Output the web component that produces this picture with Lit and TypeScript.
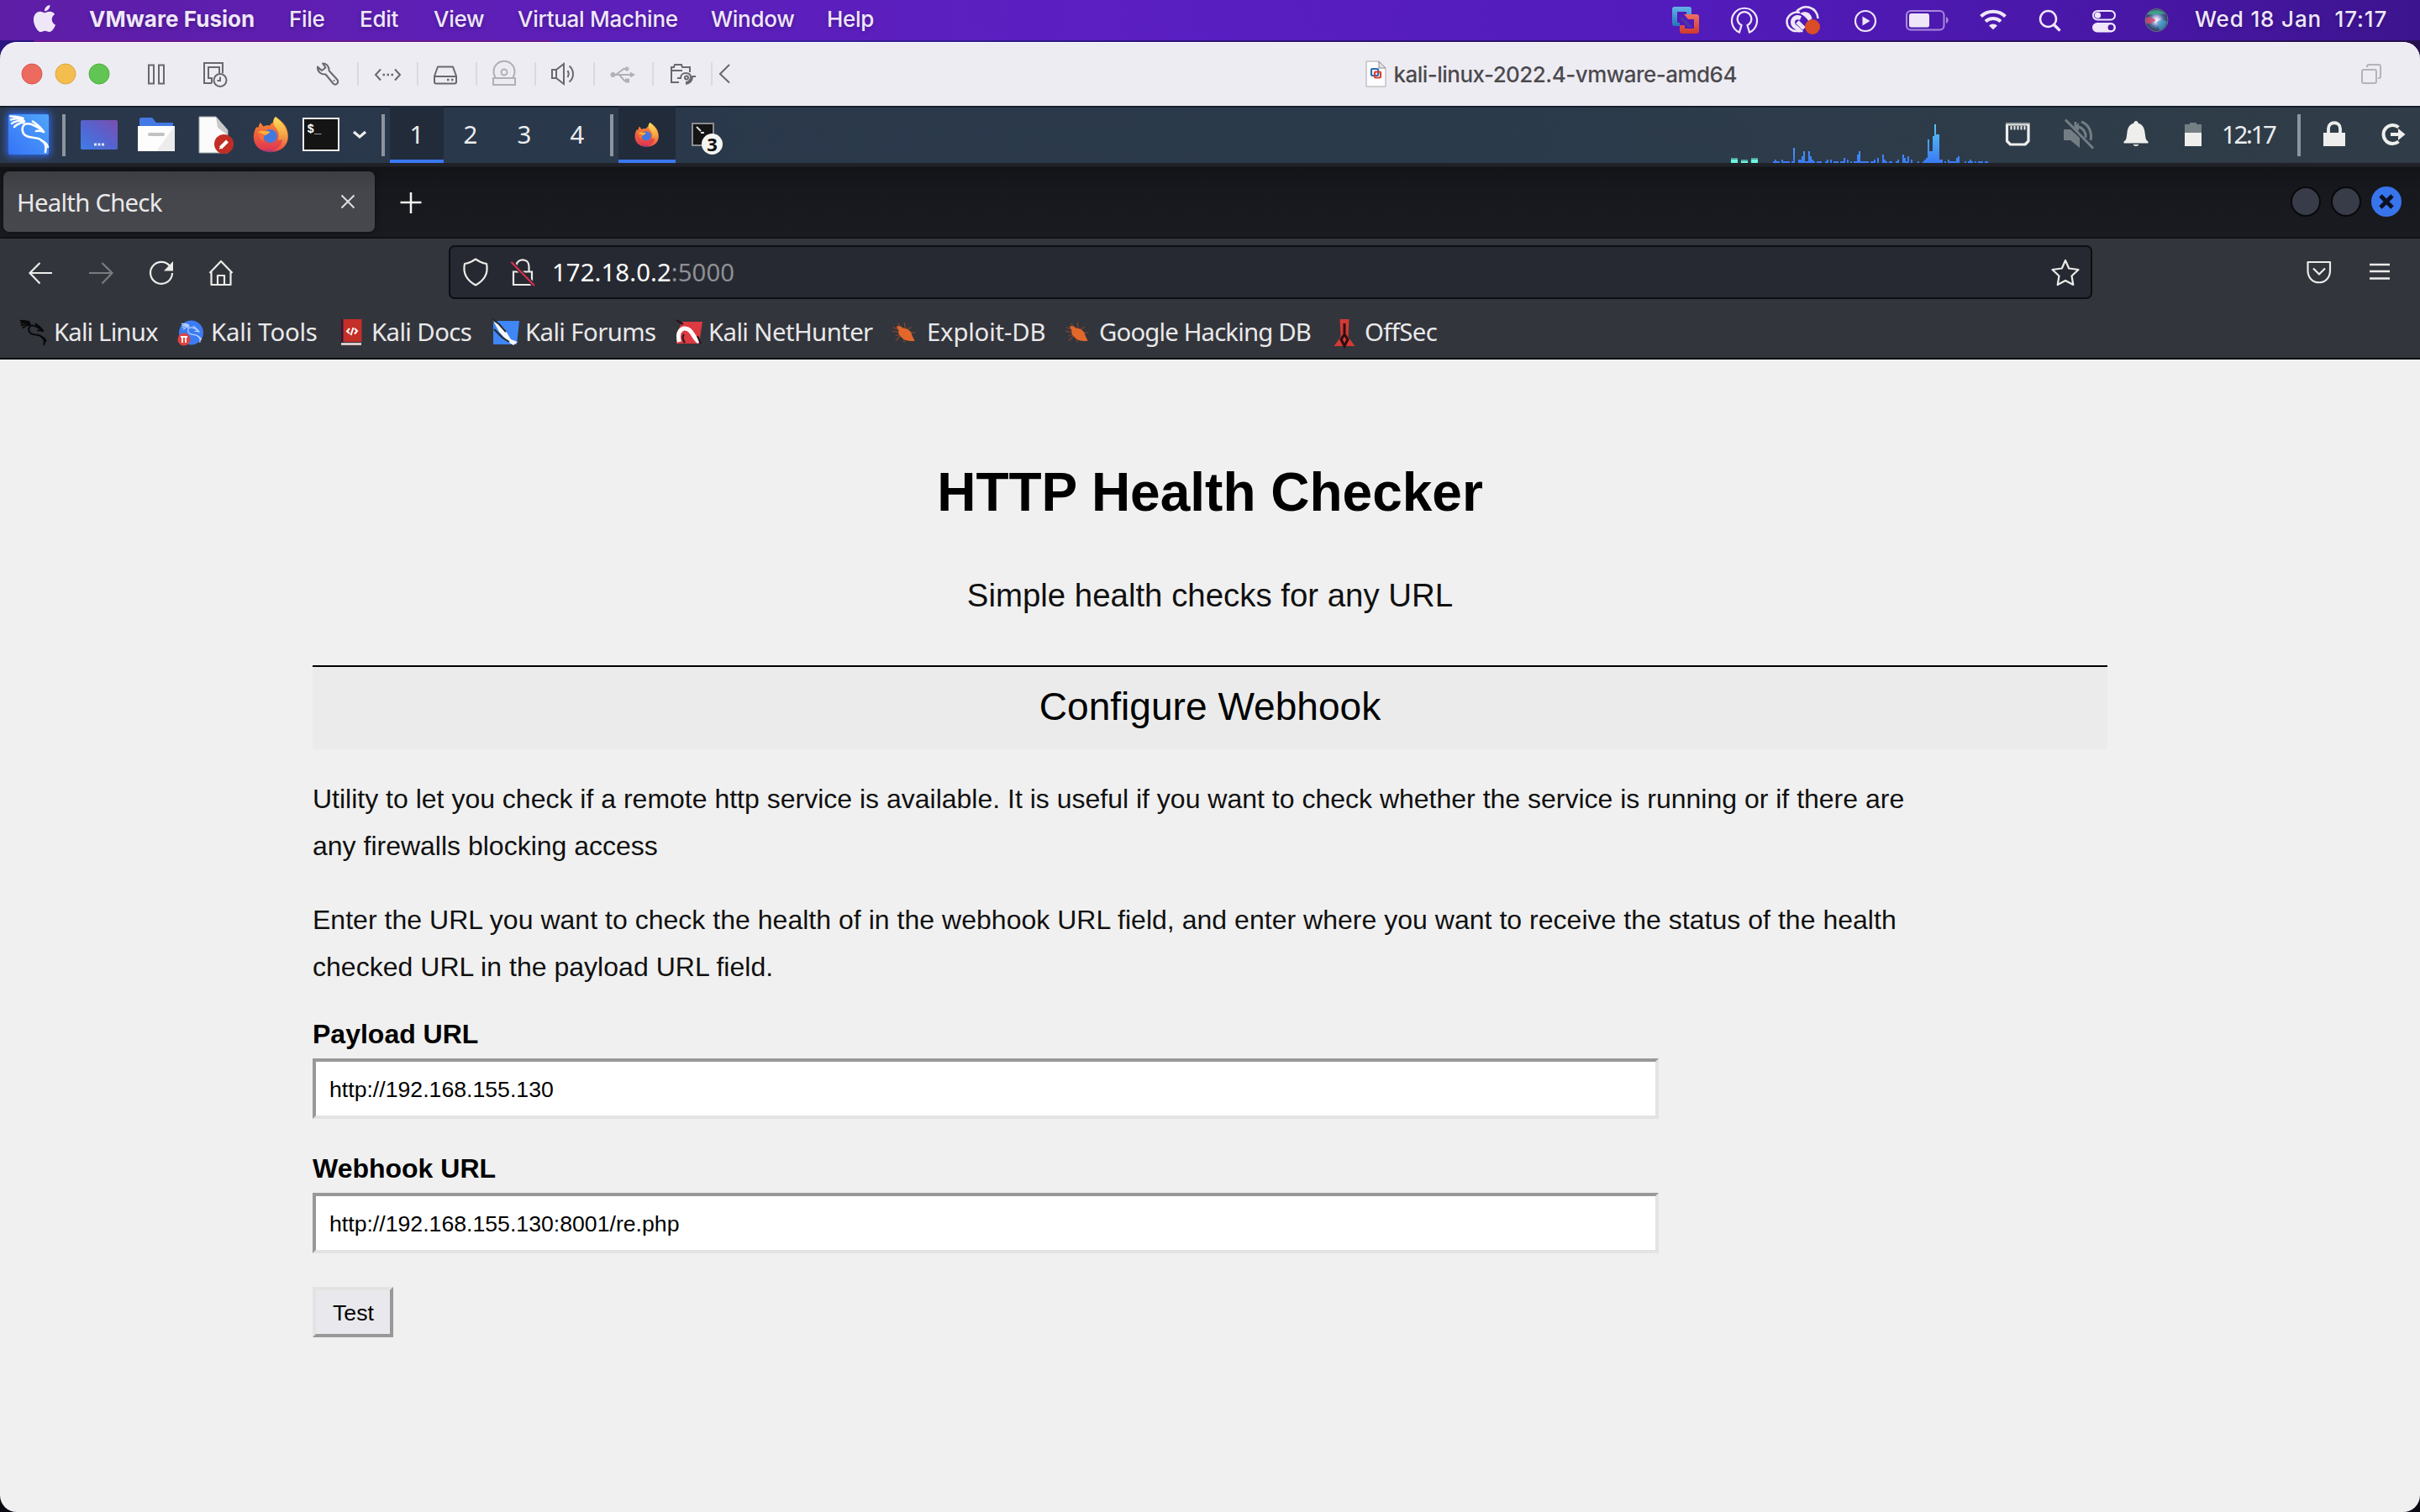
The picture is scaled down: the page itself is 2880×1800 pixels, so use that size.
import { LitElement, html, svg, css, unsafeCSS, SVGTemplateResult } from "lit";
import { customElement, state } from "lit/decorators.js";

/** Turns a list of column starts into grid track widths. */
const tracks = (from: number, starts: number[]) =>
  unsafeCSS(
    [from, ...starts]
      .map((s, i, all) => (i + 1 < all.length ? `${all[i + 1] - s}px` : "1fr"))
      .join(" ")
  );

/** An icon as tall as its row; its drawing uses screen coordinates. */
const icon = (x: number, y: number, w: number, h: number, body: SVGTemplateResult) =>
  html`<svg width=${w} height=${h} viewBox="${x} ${y} ${w} ${h}" fill="none">${body}</svg>`;

const dragon = (color: string, w: number) => svg`
  <g stroke=${color} fill="none" stroke-linecap="round" stroke-linejoin="round" stroke-width=${w}>
    <path d="M2.500 2.500c5 0 10 .3 15 2.500M3 6.500c5-1.800 9-1.500 14-.5M4 11c3.500-2.500 8-3.500 13.500-3.500M7 15c3-3 6-4.500 11-5.500"/>
    <path d="M17 5c-1 1 0 3 2 3.500"/>
    <path d="M19 12c4-1.500 8-.5 12 1.500 4 2 7.500 3 11 7.500-3-1.500-6-1.500-9-1"/>
    <path d="M29 8.500c5 3.500 10 7 13 12.500"/>
    <path d="M19 12c-3.500 4-3 10 1 13 5 4 12 1.500 18 5 5 3 8 8 6 15"/>
    <path d="M39 31c4 2 7 4.500 8 8"/>
  </g>`;

const firefox = svg`
  <path d="M4 13C0 20-1 31 6 38c8 8 24 8 32 0 6-6 7-15 4-23C40 9 34 4 28 0c-2 2-3 5-3 7-2 1-3 2-4 4-3-1-6 0-8 1l-4-5c-1 2-2 4-2 6z" fill="url(#fxBase)"/>
  <path d="M28 0c-4 5-3 9 0 13 4 5 5 10 3 15 2 2 4 1 5-1 1 6-3 13-13 15 10 1 18-4 20-13 2-12-6-22-15-29z" fill="url(#fxTail)"/>
  <circle cx="21.500" cy="24" r="8.500" fill="#4478df"/>
  <path d="M6 19c3-3 7-2 10-1 2 0 4 0 5 1-1 2-4 2-6 4-2 2-3 5-1 8-4-2-7-6-8-12z" fill="#f0703a"/>
  <path d="M6 19c3-2 7-2 10-1 2 0 4 0 5 1-1 2-4 2-5 4-2-1-6-3-10-4z" fill="#fbb13c"/>`;

const bug = (x: number) => svg`
  <g transform="translate(${x} 382) scale(.95)">
    <path d="M1 8l7 3M0 13l9 1M4 25l6-6M15 27l-1-8M15 2l1 7M24 8l-5 2M29 15l-8-1M7 3l4 6M4 19l7-3" stroke="#7d4630" stroke-width="1.300"/>
    <path d="M5 7c4-1 6 0 8 2 6 0 11 4 12 10l3 6c-4 1-14 0-17-5-3-2-4-6-3-8z" fill="#e2672b"/>
  </g>`;

const vmGlyph = svg`
  <path d="M3 0h17a3 3 0 0 1 3 3v6h-6V6H6v13h3v4H3a3 3 0 0 1-3-3V3a3 3 0 0 1 3-3z" fill="url(#vmBlue)"/>
  <path d="M14 9h15a3 3 0 0 1 3 3v17a3 3 0 0 1-3 3H12a3 3 0 0 1-3-3v-7h6v4h11V15h-7z" fill="url(#vmRed)"/>
  <path d="M9 13h4l11 11h-5z" fill="#4a3aa0"/>`;

const activity = [
  2, 4, 2, 2, 0, 4, 2, 2, 2, 2, 0, 2, 18, 0, 0, 4, 4, 8, 14, 2, 2, 14, 8, 4, 2, 0, 2, 2, 2, 0, 0, 2,
  4, 0, 4, 0, 2, 2, 2, 0, 2, 2, 6, 0, 4, 0, 2, 0, 2, 2, 10, 14, 2, 2, 2, 2, 2, 0, 2, 2, 4, 0, 6, 0,
  0, 10, 4, 2, 0, 2, 2, 0, 0, 2, 4, 0, 0, 10, 6, 2, 8, 0, 4, 0, 0, 0, 2, 0, 0, 2, 4, 6, 28, 14, 14, 32,
  46, 34, 34, 4, 4, 0, 2, 0, 4, 2, 2, 2, 2, 6, 8, 0, 0, 0, 2, 0, 2, 4, 2, 0, 2, 0, 2, 2, 2, 0, 2, 2,
];

@customElement("mac-menubar")
class MacMenubar extends LitElement {
  static styles = css`
    :host { display: block; height: 50px; }
    .bar {
      height: 48px; display: grid; padding-left: 36px;
      grid-template-columns: ${tracks(36, [106, 344, 428, 516, 616, 846, 984, 1988, 2056, 2124, 2204, 2264, 2352, 2424, 2486, 2548, 2612])};
      background: linear-gradient(90deg, #5e1ea6, #5e1fb6 18%, #5b1fc2 45%, #521bbb 70%, #4817a6 88%, #3d148f);
      font: 500 26px/46px Inter, sans-serif; color: #efe7f8;
      text-shadow: 0 2px 4px rgba(20, 0, 60, .35);
    }
    .bar span { white-space: pre; letter-spacing: -.27px; }
    .bar .app { font-weight: 700; letter-spacing: .05px; }
    .bar .clock { letter-spacing: .85px; }
    .edge { height: 2px; background: linear-gradient(90deg, #2b1580 40px, #6d1a90 41px, #6a1a8c 650px, #3c2bb0 670px, #2d1378 1400px, #26104f); }
    svg { display: block; }
  `;
  render() {
    return html`
      <div class="bar">
        ${icon(36, 0, 34, 48, svg`<g transform="translate(37 6) scale(1.333)" fill="#efe7f8"><path d="M12.152 6.896c-.948 0-2.415-1.078-3.960-1.040-2.040.027-3.910 1.183-4.961 3.014-2.117 3.675-.546 9.103 1.519 12.090 1.013 1.454 2.208 3.090 3.792 3.039 1.520-.065 2.090-.987 3.935-.987 1.831 0 2.350.987 3.960.948 1.637-.026 2.676-1.480 3.676-2.948 1.156-1.688 1.636-3.325 1.662-3.415-.039-.013-3.182-1.221-3.220-4.857-.026-3.040 2.480-4.494 2.597-4.559-1.429-2.090-3.623-2.324-4.390-2.376-2-.156-3.675 1.090-4.610 1.090zM15.530 3.830c.843-1.012 1.400-2.427 1.245-3.830-1.207.052-2.662.805-3.532 1.818-.78.896-1.454 2.338-1.273 3.714 1.338.104 2.715-.688 3.559-1.701"/></g>`)}
        <span class="app">VMware Fusion</span><span>File</span><span>Edit</span><span>View</span>
        <span>Virtual Machine</span><span>Window</span><span>Help</span>
        ${icon(1988, 0, 40, 48, svg`
          <defs>
            <linearGradient id="vmBlue" x2="0" y2="1"><stop stop-color="#62b4e8"/><stop offset="1" stop-color="#2676b8"/></linearGradient>
            <linearGradient id="vmRed" x2="0" y2="1"><stop stop-color="#ee7064"/><stop offset="1" stop-color="#cf3a2c"/></linearGradient>
          </defs><g transform="translate(1990 8)">${vmGlyph}</g>`)}
        ${icon(2056, 0, 40, 48, svg`<path d="M2070 38.500l2.500-8.500a8.300 8.300 0 1 1 7 0l2.500 8.500a15 15 0 1 0-12 0z" stroke="#efe7f8" stroke-width="2.200"/>`)}
        ${icon(2124, 0, 44, 48, svg`
          <path d="M2163.500 22a14 14 0 0 0-26-7M2142 15c-8-2.500-15.500 4-15.500 11 0 6 5 11 11 11h8" stroke="#efe7f8" stroke-width="2.500"/>
          <path d="M2142 16c7-4 13-1 14.500 6l-4 3c-3-4-6-7-10.500-9z" fill="#efe7f8"/>
          <path d="M2143 21.500c-6-2.500-9.500 1-9.500 5 0 3 2 5 4 6l5 4.500M2139 26l8 8" stroke="#efe7f8" stroke-width="5"/>
          <circle cx="2157" cy="32" r="9" fill="#da4d26"/>`)}
        ${icon(2204, 0, 32, 48, svg`<circle cx="2220" cy="25" r="12" stroke="#efe7f8" stroke-width="2.200"/><path d="M2216.500 19.500v11l9-5.500z" fill="#efe7f8"/>`)}
        ${icon(2264, 0, 60, 48, svg`<rect x="2269" y="13" width="44.500" height="22.500" rx="5" stroke="#a98adb" stroke-width="2"/><rect x="2272" y="16" width="24" height="16.500" rx="2.500" fill="#efe7f8"/><path d="M2316 20c3.500 1.500 3.500 6.500 0 8z" fill="#a98adb"/>`)}
        ${icon(2352, 0, 40, 48, svg`<path d="M2357.500 19.500a21 21 0 0 1 29 0M2363 25.500a13 13 0 0 1 18 0" stroke="#efe7f8" stroke-width="4"/><path d="M2367 30.500a7 7 0 0 1 10 0l-5 4.800z" fill="#efe7f8"/>`)}
        ${icon(2424, 0, 34, 48, svg`<circle cx="2437.500" cy="22.500" r="9.500" stroke="#efe7f8" stroke-width="2.500"/><path d="M2444.500 29.500l6 6" stroke="#efe7f8" stroke-width="3.500" stroke-linecap="round"/>`)}
        ${icon(2486, 0, 36, 48, svg`<rect x="2491" y="13" width="26" height="10.500" rx="5.250" stroke="#efe7f8" stroke-width="2"/><circle cx="2496.500" cy="18.200" r="3.600" fill="#efe7f8"/><rect x="2490" y="27" width="28" height="11.500" rx="5.750" fill="#efe7f8"/><circle cx="2512" cy="32.700" r="3.400" fill="#4a18a6"/>`)}
        ${icon(2548, 0, 36, 48, svg`
          <defs><radialGradient id="siri"><stop stop-color="#fff"/><stop offset=".25" stop-color="#c9c6e8"/><stop offset=".6" stop-color="#4a6d9c"/><stop offset="1" stop-color="#2c2a55"/></radialGradient></defs>
          <circle cx="2566.500" cy="24" r="14" fill="url(#siri)"/>
          <path d="M2555 17c5-6 17-7 22 0-6-1-14 1-22 0z" fill="#3fae86" opacity=".8"/>
          <path d="M2553.500 24c0-5 6-5 12 0-4 4-9 5-11 4z" fill="#d8486f" opacity=".8"/>
          <path d="M2567 26c5-3 10-2 12 0-1 5-5 9-9 10z" fill="#3fa0c8" opacity=".7"/>
          <circle cx="2566.500" cy="24" r="13.500" stroke="#8f8cb8" stroke-width="1" opacity=".7"/>`)}
        <span class="clock">Wed 18 Jan  17:17</span>
      </div>
      <div class="edge"></div>`;
  }
}

@customElement("vm-toolbar")
class VmToolbar extends LitElement {
  static styles = css`
    :host { display: block; height: 76px; background: linear-gradient(90deg, #2b1580, #26104f); }
    .bar {
      height: 76px; display: grid; border-radius: 20px 20px 0 0; background: #eeecf3;
      box-shadow: inset 0 1px 0 #fbfaff; box-sizing: border-box;
      grid-template-columns: ${tracks(0, [20, 170, 236, 372, 1619, 1658.5, 2804])};
    }
    .bar > :first-child { grid-column: 2; }
    svg { display: block; }
    span { font: 500 26px/77px Inter, sans-serif; color: #4b4a4e; letter-spacing: -.53px; }
  `;
  render() {
    const seps = [426, 497, 567, 637, 707, 777, 847];
    const k = "#69686d";
    const g = "#b2b0b6";
    return html`
      <div class="bar">
        ${icon(20, 50, 120, 76, svg`
          <circle cx="38" cy="88" r="12" fill="#ec6a5e" stroke="#d5574c"/>
          <circle cx="78" cy="88" r="12" fill="#f4be4f" stroke="#dba63c"/>
          <circle cx="118" cy="88" r="12" fill="#61c554" stroke="#4fae42"/>`)}
        ${icon(170, 50, 40, 76, svg`<g stroke=${k} stroke-width="2"><rect x="177" y="77.500" width="6" height="22"/><rect x="189" y="77.500" width="6" height="22"/></g>`)}
        ${icon(236, 50, 40, 76, svg`<g stroke=${k} stroke-width="2"><path d="M265 87V75h-22v24h9"/><path d="M261 87v-7h-13v13h4v6"/><circle cx="262" cy="95.500" r="7.500"/><path d="M262 91.500v4.500h-3.500"/></g>`)}
        ${icon(372, 50, 510, 76, svg`
          ${seps.map((x) => svg`<path d="M${x} 74v28" stroke="#dcdae1" stroke-width="2"/>`)}
          <path d="M384 75.500c5 0 8 4 7.500 8.500l10 11c2 3-1 7-4.500 5l-9.500-11.500c-5 .5-10-3-9.500-9l5 4.500 4.500-3.500z" stroke=${k} stroke-width="2" stroke-linejoin="round"/>
          <circle cx="397.500" cy="96" r="1" fill=${k}/>
          <path d="M453 82.500l-6 6.500 6 6.500M470 82.500l6 6.500-6 6.500" stroke=${k} stroke-width="2"/>
          <path d="M455.500 89h2.500M460.500 89h2.500M465.500 89h2.500" stroke=${k} stroke-width="2.500"/>
          <path d="M517 90.500l4-11h18l4 11v7a2 2 0 0 1-2 2h-22a2 2 0 0 1-2-2zM517 91h26" stroke=${k} stroke-width="2" stroke-linejoin="round"/>
          <path d="M532 95h2.500M537 95h2.500" stroke=${k} stroke-width="2.500"/>
          <g stroke=${g} stroke-width="2"><path d="M589.500 92a12.500 12.500 0 1 1 21 0"/><circle cx="600" cy="86" r="3.500"/><rect x="587" y="93" width="26" height="8"/></g>
          <g stroke=${k} stroke-width="2"><path d="M657 83h5l9-7v24l-9-7h-5zM662 83v10M675.500 84c1.500 2.500 1.500 5.500 0 8M677.500 78.500c6 5 6 14 0 19"/></g>
          <g stroke=${g} stroke-width="2"><path d="M728 89h25M733 89l9-7h3M737 89l6 7h3"/><circle cx="729.500" cy="89" r="2" fill=${g}/><path d="M750 86.500l4 2.500-4 2.500"/><circle cx="746" cy="82" r="1.500"/><rect x="745" y="94.500" width="3" height="3"/></g>
          <g stroke=${k} stroke-width="2"><path d="M808 98h-9V80h3l1-3h8l1 3h9v6M799 84h13"/><path d="M806 93h4c0-4 3-6 6-6 4 0 6 2 6 5s-3 6-6 6M828 91h-4c0 5-3 8-8 9" /><circle cx="817" cy="92.500" r="2"/></g>
          <path d="M868 77l-11 11 11 10.500" stroke=${k} stroke-width="2"/>`)}
        ${icon(1620, 50, 36, 76, svg`
          <path d="M1627 73h15l8 8v22h-23z" fill="#fdfdfd" stroke="#a9a8ad"/><path d="M1642 73v8h8z" fill="#e2e1e6" stroke="#8b8a90"/>
          <rect x="1633" y="82" width="8" height="8" rx="1" stroke="#2c6bb5" stroke-width="2.200"/><rect x="1637" y="85.500" width="7" height="7" rx="1" stroke="#d8402f" stroke-width="2.200"/>`)}
        <span>kali-linux-2022.4-vmware-amd64</span>
        ${icon(2804, 50, 36, 76, svg`<g stroke="#b5b3b9" stroke-width="2"><rect x="2811" y="83" width="17" height="16" rx="2"/><path d="M2817 80v-1a2 2 0 0 1 2-2h12a2 2 0 0 1 2 2v12a2 2 0 0 1-2 2h-1"/></g>`)}
      </div>`;
  }
}

@customElement("kali-panel")
class KaliPanel extends LitElement {
  static styles = css`
    :host { display: block; }
    .bar {
      height: 68px; display: grid; box-shadow: inset 0 2px 0 #16202c;
      background: linear-gradient(90deg, #2a374b, #2b3a4b 60%, #303d48);
      grid-template-columns: ${tracks(0, [464, 528, 592, 656, 718, 736, 804, 870, 2056, 2382, 2450, 2522, 2594, 2644, 2730, 2760, 2828])};
      font: 29.330px/68px "Noto Sans", sans-serif; color: #eceef0;
    }
    .cell { text-align: center; }
    .on { background: #222b3a; box-shadow: inset 0 -4px 0 #3a78f6; }
    .gap { grid-column: 9; }
    .clock { letter-spacing: -2.300px; }
    svg { display: block; }
    .on svg { margin: 0 auto; }
  `;
  render() {
    const w = "#eeeeec";
    return html`
      <div class="bar">
        ${icon(0, 126, 464, 68, svg`
          <defs>
            <linearGradient id="kBlue" x1="0" y1="1" x2="1" y2="0"><stop stop-color="#3672f8"/><stop offset="1" stop-color="#4fa6fa"/></linearGradient>
            <linearGradient id="desk" x1="0" y1="1" x2="1" y2="0"><stop stop-color="#3e7de6"/><stop offset=".5" stop-color="#5663cf"/><stop offset="1" stop-color="#7a4eb0"/></linearGradient>
            <linearGradient id="fxBase" x2="0" y2="1"><stop stop-color="#f79a35"/><stop offset=".55" stop-color="#ee5a3c"/><stop offset=".9" stop-color="#e23a50"/><stop offset="1" stop-color="#8c3a78"/></linearGradient>
            <linearGradient id="fxTail" x2="0" y2="1"><stop stop-color="#fbe05a"/><stop offset=".5" stop-color="#f5a945"/><stop offset="1" stop-color="#e8503e"/></linearGradient>
            <filter id="glow" x="-30%" y="-30%" width="160%" height="160%"><feGaussianBlur stdDeviation="4"/></filter>
          </defs>
          <rect x="8" y="134" width="52" height="52" rx="4" fill="#2f66e8" filter="url(#glow)"/>
          <rect x="10" y="136" width="48" height="48" rx="2" fill="url(#kBlue)"/>
          <g transform="translate(10 136)">${dragon("#fff", 2.6)}</g>
          <path d="M76 136v50" stroke="#8e949e" stroke-width="4"/>
          <rect x="96" y="143" width="44" height="35" rx="2" fill="url(#desk)"/><path d="M112 172h12" stroke="#dfe4f5" stroke-width="3" stroke-dasharray="3 1.500"/>
          <path d="M166 150v-8a2 2 0 0 1 2-2h13l5 6h20v6z" fill="#4379e4"/><path d="M164 150h44v30h-44z" fill="#fdfdfd"/><path d="M208 150v30h-22z" fill="#ececec"/><path d="M178 160h16" stroke="#c2c2c2" stroke-width="4" stroke-linecap="round"/>
          <path d="M237 139h20l14 16v27h-34z" fill="#fbfbfb" stroke="#a4a8ae"/><path d="M257 139l14 16v6l-12-9z" fill="#c9c9c9"/>
          <circle cx="266.500" cy="171.500" r="11.500" fill="#c22d25"/><path d="M262.500 176l8-8" stroke="#fff" stroke-width="4"/><path d="M260.500 178l2-4 2 2z" fill="#fff"/>
          <g transform="translate(301 139) scale(.96)">${firefox}</g>
          <rect x="361" y="141" width="42" height="38" fill="#141414" stroke="#ededed" stroke-width="2"/>
          <text x="365.500" y="158" font-family="Liberation Mono, monospace" font-weight="700" font-size="14" fill="#fff">$_</text>
          <path d="M421 157l7 6 7-6" stroke="#eeeeec" stroke-width="3.200"/>
          <path d="M456 136v50" stroke="#8e949e" stroke-width="4"/>`)}
        <div class="cell on">1</div><div class="cell">2</div><div class="cell">3</div><div class="cell">4</div>
        ${icon(718, 126, 16, 68, svg`<path d="M728 136v50" stroke="#8e949e" stroke-width="4"/>`)}
        <div class="on">${icon(736, 126, 68, 68, svg`<g transform="translate(755 146) scale(.66)">${firefox}</g>`)}</div>
        ${icon(804, 126, 66, 68, svg`
          <rect x="824" y="147" width="25" height="26" fill="#141414" stroke="#8b8d90" stroke-width="2"/>
          <path d="M829 151l5 5M834 158h4" stroke="#ddd" stroke-width="2"/>
          <circle cx="847.500" cy="171.500" r="12.500" fill="#f4f4f2"/>
          <text x="847.500" y="179.500" text-anchor="middle" font-family="Noto Sans, sans-serif" font-weight="700" font-size="22" fill="#111">3</text>`)}
        <div class="gap"></div>
        ${icon(2056, 126, 326, 68, svg`
          <defs><linearGradient id="load" gradientUnits="userSpaceOnUse" x1="0" y1="148" x2="0" y2="194"><stop stop-color="#58c6ee"/><stop offset="1" stop-color="#3a7af6"/></linearGradient></defs>
          ${[2060, 2072, 2084].map((x, i) => svg`<rect x=${x} y=${i === 1 ? 190 : 188} width="8" height=${i === 1 ? 4 : 6} fill="#4fa99c"/><rect x=${x} y=${i === 1 ? 192 : 190} width="8" height=${i === 1 ? 2 : 4} fill="#6ff5e0"/>`)}
          ${activity.map((h, i) => svg`<rect x=${2110 + 2 * i} y=${194 - h} width="2" height=${h} fill="url(#load)"/>`)}`)}
        ${icon(2382, 126, 40, 68, svg`<path d="M2388.500 148h25.500v20l-4 4h-17.500l-4-4z" stroke=${w} stroke-width="3.200" stroke-linejoin="round"/><path d="M2387 147h28.500" stroke="#9ba2a6" stroke-width="2"/><path d="M2393.500 150v4.500M2397.500 150v4.500M2401.500 150v4.500M2405.500 150v4.500M2409.500 150v4.500" stroke=${w} stroke-width="2"/>`)}
        ${icon(2450, 126, 48, 68, svg`<g stroke="#737d84" stroke-width="3"><path d="M2458 142.500l33 34"/><path d="M2477 145c9 3 13 13 11 22M2474 151c6 2 9 8 8 13M2470 145v6"/></g><path d="M2456 154h8l11 10v12l-11-9h-8zM2468 152l6-6v10z" fill="#737d84"/>`)}
        ${icon(2522, 126, 40, 68, svg`<path d="M2542 144c1.500 0 2.500 1 2.500 2.500 5 1.500 7.500 5.500 8 11l1 7c.5 2 1.500 3 3 4v2h-29v-2c1.500-1 2.500-2 3-4l1-7c.5-5.500 3-9.500 8-11 0-1.500 1-2.500 2.500-2.500zM2538.500 172h7c-1 2.500-6 2.500-7 0z" fill=${w}/>`)}
        ${icon(2594, 126, 40, 68, svg`<path d="M2600 148h6v-2h8v2h6v10h-20z" fill="#747f84"/><path d="M2600 158h20v16h-20z" fill=${w}/>`)}
        <span class="clock">12:17</span>
        ${icon(2730, 126, 16, 68, svg`<path d="M2736 136v50" stroke="#8e949e" stroke-width="4"/>`)}
        ${icon(2760, 126, 40, 68, svg`<path d="M2771 159v-6c0-9 14-9 14 0v6" stroke=${w} stroke-width="3.800"/><rect x="2765" y="158" width="26" height="16" fill=${w}/>`)}
        ${icon(2828, 126, 42, 68, svg`<path d="M2854.500 151.500a11 11 0 1 0 0 17" stroke=${w} stroke-width="4"/><path d="M2845 158h9v-5l8.500 7-8.500 7v-5h-9z" fill=${w}/>`)}
      </div>`;
  }
}

@customElement("fox-chrome")
class FoxChrome extends LitElement {
  static styles = css`
    :host { display: block; font: 29.330px "Noto Sans", sans-serif; color: #e9e9ea; }
    svg { display: block; }
    .tabs {
      height: 90px; box-sizing: border-box; display: grid; padding-left: 4px;
      grid-template-columns: ${tracks(4, [446, 470, 2720])};
      background: linear-gradient(#202227 4px, #131418 5px, #17181d 30px, #191b20);
      border-bottom: 2px solid #101115;
    }
    .tab {
      margin: 10px 0 12px; height: 72px; line-height: 74px; border-radius: 7px;
      background: linear-gradient(#3d3e43, #45464b 35%, #47484d);
      box-shadow: 0 0 6px rgba(0, 0, 0, .5);
      display: flex; justify-content: space-between; padding: 0 18px 0 16px; letter-spacing: -.75px;
    }
    .plus { grid-column: 3; }
    .tools {
      height: 76px; display: grid; align-items: start; background: #33353c;
      grid-template-columns: ${tracks(0, [28, 534, 2490, 2736])};
    }
    .nav { grid-column: 2; }
    .menu { grid-column: 5; }
    .url {
      margin-top: 8px; height: 64px; box-sizing: border-box; border: 2px solid #0d0e12;
      border-radius: 7px; background: #272932; display: flex; line-height: 61px; color: #fff;
    }
    .addr { flex: 1; margin-left: 17px; letter-spacing: .08px; }
    .port { color: #8e8f94; }
    .marks {
      height: 68px; box-sizing: border-box; background: #33353c; border-bottom: 2px solid #0b0c10;
      display: grid; line-height: 70px; white-space: nowrap;
      grid-template-columns: ${tracks(0, [20, 64, 208, 251, 400, 442, 582, 625, 800, 843, 1060, 1103, 1264, 1308, 1582, 1624])};
    }
    .marks > :first-child { grid-column: 2; }
    .marks span { letter-spacing: -.6px; }
    .marks .tight { letter-spacing: -.85px; }
    .marks .wide { letter-spacing: -.2px; }
  `;
  render() {
    const w = "#ebebe9";
    return html`
      <div class="tabs">
        <div class="tab"><span>Health Check</span>${icon(400, 204, 28, 72, svg`<path d="M406.500 232.500l15 15M421.500 232.500l-15 15" stroke="#dededf" stroke-width="2"/>`)}</div>
        <div class="plus">${icon(470, 194, 40, 88, svg`<path d="M476.500 241h25M489 229v25" stroke="#f2f2f0" stroke-width="2.500"/>`)}</div>
        ${icon(2720, 194, 160, 88, svg`
          <circle cx="2744" cy="240" r="17" fill="#383b48" stroke="#08090b" stroke-width="2"/>
          <circle cx="2792" cy="240" r="17" fill="#383b48" stroke="#08090b" stroke-width="2"/>
          <circle cx="2840" cy="240" r="18" fill="#3874ec"/><path d="M2833 233l14 14M2847 233l-14 14" stroke="#0c1020" stroke-width="4.800"/>`)}
      </div>
      <div class="tools">
        <div class="nav">${icon(28, 284, 260, 76, svg`
          <g stroke=${w} stroke-width="2.200">
            <path d="M62 325H35.500M47.500 313L35.500 325l12 12.500"/>
            <path d="M106 325h27.500M121.500 313l12 12-12 12.500" stroke="#7b7c80"/>
            <path d="M202 316.500a13 13 0 1 0 3 8.500"/>
            <path d="M249.500 325l13.500-14 13.500 14M251.500 323v16h23v-16M259 339v-11h8v11" stroke-linejoin="round"/>
          </g><path d="M206 311v11.500h-11z" fill=${w}/>`)}</div>
        <div class="url">
          ${icon(536, 294, 104, 60, svg`
            <path d="M566 308.500l5 3c2 1 4 2 8 2.500 2.500 12-3 20-13 25.500-10-5.500-15.500-13.500-13-25.500 4-.5 6-1.500 8-2.500z" stroke=${w} stroke-width="2.200" stroke-linejoin="round"/>
            <path d="M614.500 316c1-9 15-9 15 1v6.500h3.500v15.500h-22v-15.500h18" stroke=${w} stroke-width="2.200"/>
            <path d="M608.500 312l27.500 28" stroke="#272932" stroke-width="5"/><path d="M608.500 312l27.500 28" stroke="#dc2f4e" stroke-width="2.200"/>`)}
          <span class="addr">172.18.0.2<span class="port">:5000</span></span>
          ${icon(2436, 294, 52, 60, svg`<path d="M2458 310l4.200 9.500 11.300 1.500-8 7.500 1.800 10.500-9.300-5-9.300 5 1.800-10.500-8-7.500 11.300-1.500z" stroke=${w} stroke-width="2.200" stroke-linejoin="round"/>`)}
        </div>
        <div class="menu">${icon(2736, 284, 120, 76, svg`
          <path d="M2746.500 312h26.500v10c0 19-26.500 19-26.500 0z" stroke=${w} stroke-width="2.200" stroke-linejoin="round"/><path d="M2753 319.500l7 7 7-7" stroke=${w} stroke-width="2.200"/>
          <path d="M2820 315h24M2820 323h24M2820 331.500h24" stroke=${w} stroke-width="2.400"/>`)}</div>
      </div>
      <div class="marks">
        ${icon(20, 360, 40, 66, svg`<g transform="translate(23 380) scale(.67)">${dragon("#08080a", 3)}</g>`)}<span class="tight">Kali Linux</span>
        ${icon(208, 360, 40, 66, svg`<circle cx="227.500" cy="396" r="14.500" fill="#3c7cf2"/><g transform="translate(215 384) scale(.52)">${dragon("#b9d2ff", 2.4)}</g><circle cx="219" cy="404" r="7.500" fill="#e0423f"/><path d="M215 401h8M217 401v7M221 401v7" stroke="#fff" stroke-width="1.800"/>`)}<span class="wide">Kali Tools</span>
        ${icon(400, 360, 40, 66, svg`<path d="M405.500 380h25v27h-25z" fill="#c42f27"/><path d="M405.500 380h3v28h-3z" fill="#2c1a3c"/><path d="M406 409.500h24" stroke="#d9c9c9" stroke-width="3"/><path d="M416 391l-3 3.500 3 2.500M422 391l3 3-3 3.500M420.500 390l-3 9" stroke="#fff" stroke-width="2"/>`)}<span>Kali Docs</span>
        ${icon(582, 360, 40, 66, svg`<path d="M587 410v-26l6-2h25l-3 28z" fill="#3f86f6"/><path d="M586 380l14 11 8 13 8 3-5 4-6-4-11-12z" fill="#f7f7f7"/><path d="M586 380l8 6 8 9M588 392l10 10 8 5" stroke="#26282e" stroke-width="2"/>`)}<span>Kali Forums</span>
        ${icon(800, 360, 42, 66, svg`<path d="M812 383h24l-4 26h-27v-12z" fill="#dd3a42"/><path d="M808.500 407c-3-10 1-16 6.500-16 9 0 9 11 17 16" stroke="#fff" stroke-width="5"/><path d="M815 408c-3-4-3-8-1-10M805 381l8 5M834 409l-4-9" stroke="#26161c" stroke-width="2.200"/>`)}<span>Kali NetHunter</span>
        ${icon(1060, 360, 40, 66, bug(1062))}<span class="wide">Exploit-DB</span>
        ${icon(1264, 360, 40, 66, bug(1268))}<span class="tight">Google Hacking DB</span>
        ${icon(1582, 360, 40, 66, svg`<path d="M1594.500 380h11l-1 21 8 11h-25l8-11z" fill="#d23a34"/><path d="M1600 385v13l-4 6 4 8 4-8-4-6" stroke="#2a0d10" stroke-width="3"/>`)}<span>OffSec</span>
      </div>`;
  }
}

@customElement("health-page")
class HealthPage extends LitElement {
  static styles = css`
    :host { display: block; flex: 1; background: #0b0a12; }
    .page {
      height: 100%; box-sizing: border-box; background: #f0f0f0; border-radius: 0 0 20px 20px;
      padding: 102px 372px 0; font: 32px/56px "Liberation Sans", Arial, sans-serif; color: #101010;
    }
    h1 { margin: 0; font-size: 64px; line-height: 112px; text-align: center; color: #000; }
    .tagline { margin: 33px 0 0; height: 117px; font-size: 38.400px; line-height: 67px; text-align: center; }
    h2 {
      margin: 0; height: 100px; box-sizing: border-box; border-top: 2px solid #000; background: #ebebeb;
      font-weight: 400; font-size: 46.080px; line-height: 95px; text-align: center; color: #000;
    }
    .note { margin: 31px 0 0; max-width: 90%; }
    .note + .note { margin-top: 32px; letter-spacing: .025px; }
    label { display: block; margin-top: 24px; font-weight: 700; color: #000; }
    .second { margin-top: 31px; }
    input {
      display: block; margin: 1px 0 0; width: 1602px; height: 72px; box-sizing: border-box;
      border: 4px solid; border-color: #989898 #e3e3e3 #e3e3e3 #989898; background: #fff; border-radius: 0;
      padding: 2px 16px 0; font: 26.670px "Liberation Sans", Arial, sans-serif; color: #000; outline: none;
    }
    button {
      display: block; margin-top: 40px; width: 96px; height: 60px; box-sizing: border-box; padding: 2px 0 0 1px;
      border: 4px solid; border-color: #e3e3e3 #989898 #989898 #e3e3e3; background: #e9e9ed; border-radius: 0;
      font: 26.670px "Liberation Sans", Arial, sans-serif; color: #000;
    }
  `;
  @state() private payload = "http://192.168.155.130";
  @state() private webhook = "http://192.168.155.130:8001/re.php";
  render() {
    return html`
      <div class="page">
        <h1>HTTP Health Checker</h1>
        <p class="tagline">Simple health checks for any URL</p>
        <h2>Configure Webhook</h2>
        <p class="note">Utility to let you check if a remote http service is available. It is useful if you want to check whether the service is running or if there are any firewalls blocking access</p>
        <p class="note">Enter the URL you want to check the health of in the webhook URL field, and enter where you want to receive the status of the health checked URL in the payload URL field.</p>
        <label>Payload URL</label>
        <input type="text" spellcheck="false" .value=${this.payload} />
        <label class="second">Webhook URL</label>
        <input type="text" spellcheck="false" .value=${this.webhook} />
        <button>Test</button>
      </div>`;
  }
}

@customElement("app-root")
class AppRoot extends LitElement {
  static styles = css`
    :host { display: flex; flex-direction: column; width: 2880px; height: 1800px; overflow: hidden; }
  `;
  render() {
    return html`
      <mac-menubar></mac-menubar>
      <vm-toolbar></vm-toolbar>
      <kali-panel></kali-panel>
      <fox-chrome></fox-chrome>
      <health-page></health-page>`;
  }
}
